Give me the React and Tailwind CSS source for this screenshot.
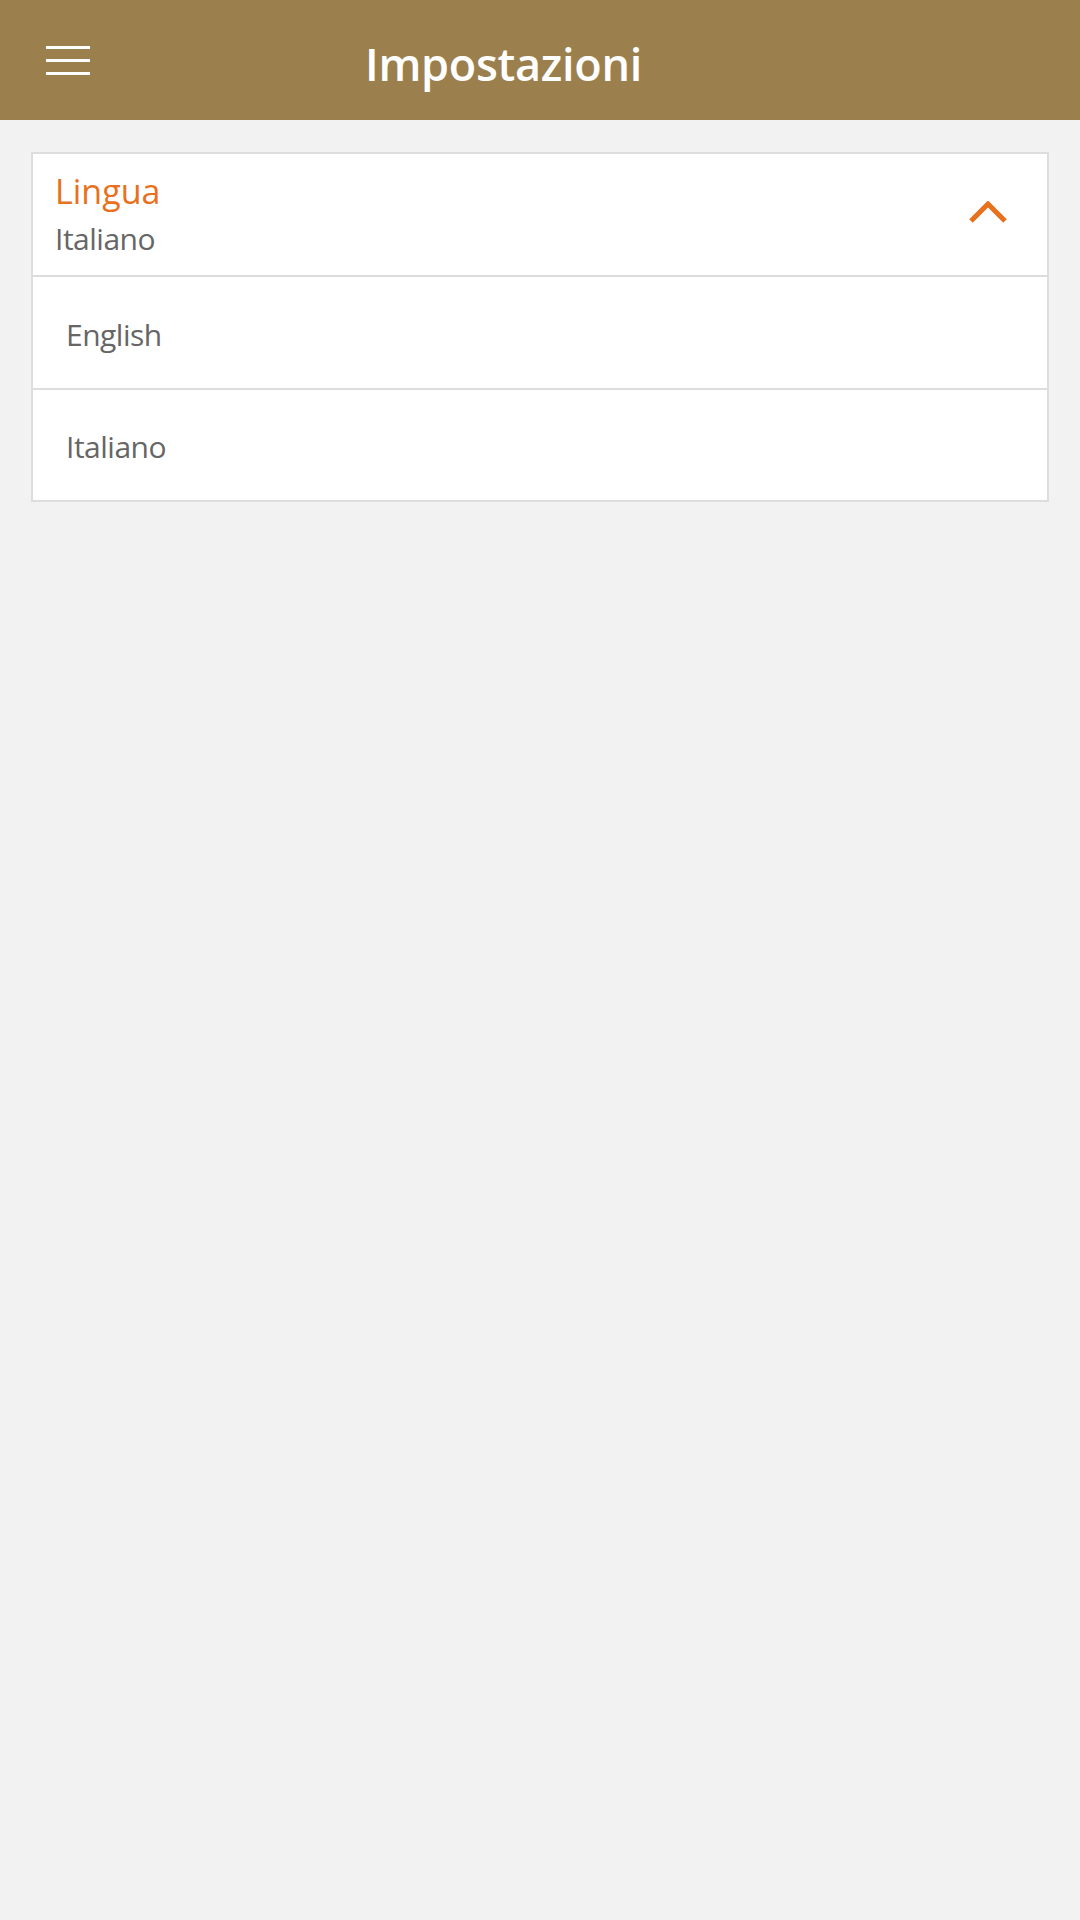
import React from "react";

function Hamburger() {
  return (
    <div className="flex flex-col gap-[10px] w-[44px]">
      <div className="h-[3px] bg-white" />
      <div className="h-[3px] bg-white" />
      <div className="h-[3px] bg-white" />
    </div>
  );
}

export default function App() {
  return (
    <div className="min-h-[1920px] bg-[#f2f2f2] font-['Open_Sans',sans-serif]">
      {/* header */}
      <div className="h-[120px] bg-[#9b804d] flex items-center">
        <div className="pl-[46px]">
          <Hamburger />
        </div>
        <h1 className="ml-[275px] text-white text-[45px] font-semibold leading-none mt-[6px] tracking-[-0.3px]">
          Impostazioni
        </h1>
      </div>

      {/* language picker */}
      <div className="mt-[32px] mx-[31px] bg-white border-2 border-[#dddddd]">
        <div className="h-[121px] flex items-start justify-between">
          <div className="pl-[22px] pt-[17px]">
            <div className="text-[34px] leading-[40px] text-[#e8711e]">Lingua</div>
            <div className="text-[30px] leading-[40px] text-[#666666] mt-[8px] tracking-[-0.5px]">Italiano</div>
          </div>
          <svg className="mt-[47px] mr-[40px]" width="38" height="22" viewBox="0 0 38 22">
            <polyline points="2,20 19,3 36,20" fill="none" stroke="#e8711e" strokeWidth="5" />
          </svg>
        </div>
        <div className="h-[113px] border-t-2 border-[#dddddd] flex items-center pl-[33px] pt-[4px]">
          <span className="text-[30px] leading-[40px] text-[#666666] tracking-[-0.5px]">English</span>
        </div>
        <div className="h-[112px] border-t-2 border-[#dddddd] flex items-center pl-[33px] pt-[4px]">
          <span className="text-[30px] leading-[40px] text-[#666666] tracking-[-0.5px]">Italiano</span>
        </div>
      </div>
    </div>
  );
}
